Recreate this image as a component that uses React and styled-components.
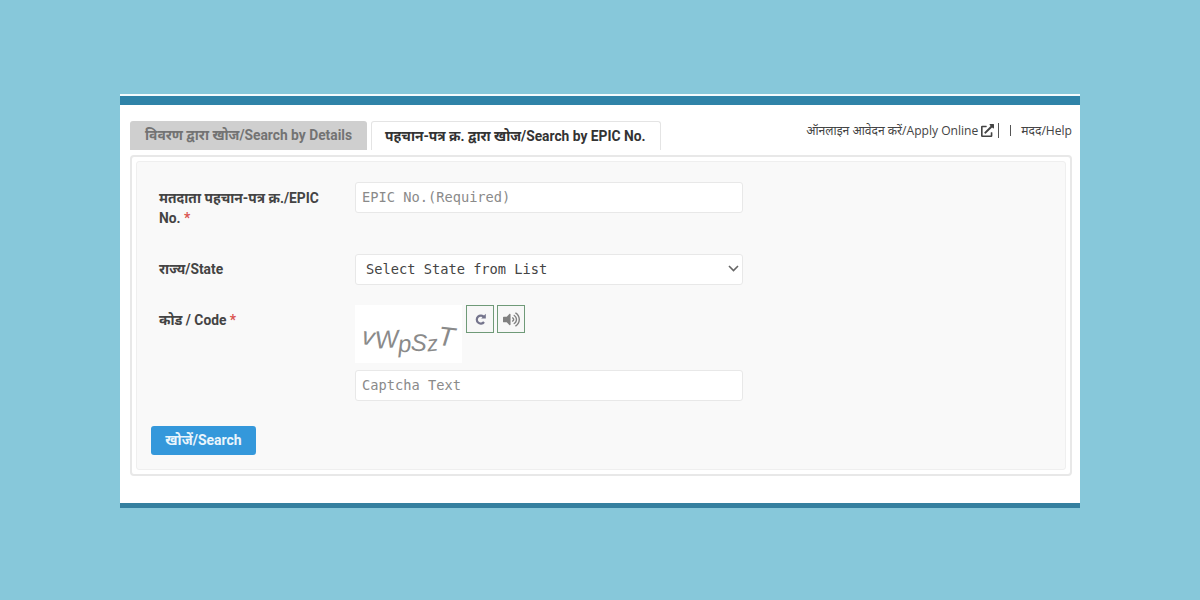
import React from 'react';
import styled, { createGlobalStyle } from 'styled-components';
import { FaExternalLinkAlt, FaVolumeUp } from 'react-icons/fa';

const GlobalStyle = createGlobalStyle`
html, body {
  margin: 0;
  padding: 0;
  background: #87c8da;
  font-family: Roboto, "Noto Sans", "Noto Sans Devanagari", sans-serif;
}
`

const Page = styled.div`
width: 1200px;
height: 600px;
padding-top: 94px;
box-sizing: border-box;
display: flex;
justify-content: center;
overflow: hidden;
`

const Card = styled.div`
width: 960px;
height: 414px;
box-sizing: border-box;
background: #fff;
border-top: 2px solid #f4fbfd;
display: flex;
flex-direction: column;
`

const TopBar = styled.div`
flex: none;
height: 9px;
background: #2f83a8;
`

const Body = styled.div`
flex: 1;
min-height: 0;
padding: 16px 8px 27px 10px;
display: flex;
flex-direction: column;
`

const BottomBar = styled.div`
flex: none;
height: 5px;
background: #35809f;
`

const TabRow = styled.div`
flex: none;
display: flex;
align-items: flex-start;
height: 34px;
`

const Tab = styled.div`
height: 29px;
box-sizing: border-box;
padding: ${props => props.active ? '0 14px 2px 13px' : '0 15px 2px'};
display: flex;
align-items: center;
margin-right: 4px;
border-radius: 3px 3px 0 0;
font-size: 13.8px;
font-weight: 700;
color: ${props => props.active ? '#333' : '#737373'};
background: ${props => props.active ? '#fff' : '#cfcfcf'};
border: ${props => props.active ? '1px solid #e4e4e4' : 'none'};
border-bottom: none;
`

const TopLinks = styled.div`
margin-left: auto;
display: flex;
align-items: center;
font-family: "Open Sans", "Noto Sans", sans-serif;
font-size: 12.1px;
color: #444;
height: 18px;
`

const LinkIcon = styled(FaExternalLinkAlt)`
width: 13px;
height: 13px;
margin-left: 3px;
color: #444;
`

const Divider = styled.span`
width: 1px;
height: ${props => props.tall ? '15px' : '11px'};
background: #555;
margin: ${props => props.tall ? '0 11px 0 4px' : '0 10px 0 0'};
`

const Panel = styled.div`
flex: 1;
min-height: 0;
border: 2px solid #e8e8e8;
border-radius: 4px;
padding: 4px;
`

const Well = styled.div`
height: 100%;
box-sizing: border-box;
background: #f9f9f9;
border: 1px solid #efefef;
border-radius: 3px;
padding: 20px 14px 0 14px;
`

const FormRow = styled.div`
display: flex;
height: ${props => props.h}px;
`

const Label = styled.div`
width: 204px;
padding: ${props => props.first ? 6 : 5}px 0 0 8px;
box-sizing: border-box;
font-size: 13.8px;
line-height: 20px;
font-weight: 700;
color: #444;
`

const Star = styled.span`
color: #d9534f;
`

const Field = styled.div`
width: 388px;
`

const TextInput = styled.input`
display: block;
width: 100%;
height: 31px;
box-sizing: border-box;
padding: 0 6px 2px;
background: #fff;
border: 1px solid #e8e8e8;
border-radius: 3px;
font-family: "DejaVu Sans Mono", "Liberation Mono", monospace;
font-size: 13.7px;
outline: none;
&::placeholder {
  color: #8a8a8a;
  opacity: 1;
}
`

const SelectBox = styled.div`
height: 31px;
box-sizing: border-box;
padding: 0 3px 2px 10px;
background: #fff;
border: 1px solid #e8e8e8;
border-radius: 3px;
display: flex;
align-items: center;
justify-content: space-between;
font-family: "DejaVu Sans Mono", "Liberation Mono", monospace;
font-size: 13.7px;
color: #444;
`

const CaptchaRow = styled.div`
display: flex;
align-items: flex-start;
gap: 3px;
margin-bottom: 7px;
`

const CaptchaImage = styled.div`
width: 107px;
height: 58px;
margin-right: 1px;
background: #fff;
display: flex;
align-items: center;
justify-content: center;
padding-top: 13px;
box-sizing: border-box;
font-family: "Liberation Sans", sans-serif;
font-style: italic;
color: #8a8a8a;
`

const CaptchaChar = styled.span`
display: inline-block;
font-size: ${props => props.s}px;
transform: translateY(${props => props.y}px) rotate(${props => props.r}deg);
`

const IconButton = styled.div`
width: 28px;
height: 28px;
box-sizing: border-box;
border: 1.5px solid #6f9a78;
background: #f7f7f7;
display: flex;
align-items: center;
justify-content: center;
color: #808080;
`

const SearchButton = styled.div`
width: 105px;
height: 29px;
padding-bottom: 2px;
box-sizing: border-box;
display: flex;
align-items: center;
justify-content: center;
background: #3498db;
border-radius: 3px;
color: #eaf5fc;
font-size: 14px;
font-weight: 700;
`

const captcha = [
    ['v', 8, -4, 25],
    ['W', -4, -1, 25],
    ['p', -4, 3, 24],
    ['S', 3, 2, 24],
    ['z', -6, 3, 22],
    ['T', 6, -3, 27],
];

const RefreshIcon = () => (
    <svg width="13" height="13" viewBox="0 0 13 13" fill="none">
        <path d="M10 4.2A4 4 0 1 0 10 9" stroke="#74748c" strokeWidth="2.2" />
        <path d="M7.2 5.4h4.6V.8z" fill="#74748c" />
    </svg>
);

const App = () => {
    return (
        <>
            <GlobalStyle />
            <Page>
                <Card>
                    <TopBar />
                    <Body>
                        <TabRow>
                            <Tab>विवरण द्वारा खोज/Search by Details</Tab>
                            <Tab active>पहचान-पत्र क्र. द्वारा खोज/Search by EPIC No.</Tab>
                            <TopLinks>
                                ऑनलाइन आवेदन करें/Apply Online
                                <LinkIcon />
                                <Divider tall />
                                <Divider />
                                मदद/Help
                            </TopLinks>
                        </TabRow>
                        <Panel>
                            <Well>
                                <FormRow h={72}>
                                    <Label first>मतदाता पहचान-पत्र क्र./EPIC<br />No. <Star>*</Star></Label>
                                    <Field><TextInput placeholder="EPIC No.(Required)" /></Field>
                                </FormRow>
                                <FormRow h={51}>
                                    <Label>राज्य/State</Label>
                                    <Field>
                                        <SelectBox>
                                            Select State from List
                                            <svg width="11" height="7" viewBox="0 0 11 7" fill="none" stroke="#666" strokeWidth="1.6"><path d="M1 1l4.5 4.5L10 1" /></svg>
                                        </SelectBox>
                                    </Field>
                                </FormRow>
                                <FormRow h={121}>
                                    <Label>कोड / Code <Star>*</Star></Label>
                                    <Field>
                                        <CaptchaRow>
                                            <CaptchaImage>
                                                {captcha.map(([c, r, y, s], i) => <CaptchaChar key={i} r={r} y={y} s={s}>{c}</CaptchaChar>)}
                                            </CaptchaImage>
                                            <IconButton><RefreshIcon /></IconButton>
                                            <IconButton><FaVolumeUp size={17} /></IconButton>
                                        </CaptchaRow>
                                        <TextInput placeholder="Captcha Text" />
                                    </Field>
                                </FormRow>
                                <SearchButton>खोजें/Search</SearchButton>
                            </Well>
                        </Panel>
                    </Body>
                    <BottomBar />
                </Card>
            </Page>
        </>
    );
}

export default App;
